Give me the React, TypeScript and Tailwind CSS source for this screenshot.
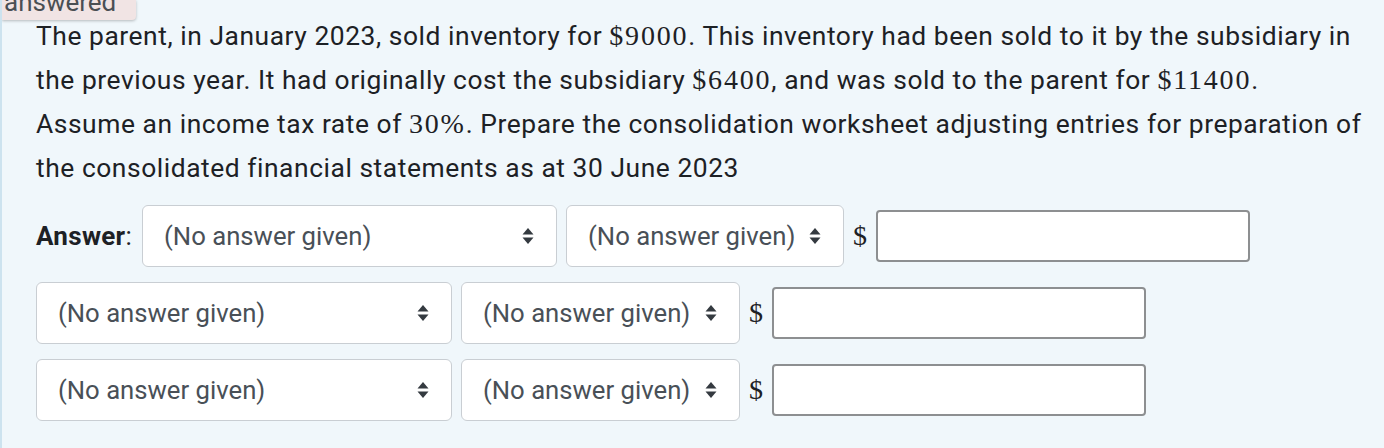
import React from "react";

function UpDown() {
  return (
    <svg width="12" height="18" viewBox="0 0 12 18" className="shrink-0">
      <path d="M6 1 L11.5 7.5 H0.5 Z" fill="#343a40" />
      <path d="M6 17 L11.5 10.5 H0.5 Z" fill="#343a40" />
    </svg>
  );
}

function Select({ w }: { w: string }) {
  return (
    <div className={`${w} h-[62px] shrink-0 flex items-center justify-between pl-[21px] pr-[22px] bg-white border border-[#c9ced3] rounded-[6px] text-[#495057]`}>
      <span>(No answer given)</span>
      <UpDown />
    </div>
  );
}

function Money() {
  return (
    <div className="flex items-center gap-[9px]">
      <span className="font-['Liberation_Serif',serif] text-[28px] leading-none text-[#1d2125]">$</span>
      <div className="w-[374px] h-[52px] bg-white border-2 border-[#8d8f91] rounded-[4px]" />
    </div>
  );
}

function M({ children }: { children: React.ReactNode }) {
  return <span className="font-['Liberation_Serif',serif] text-[28px] leading-none tracking-[1.8px]">{children}</span>;
}

export default function App() {
  return (
    <div className="relative h-[448px] bg-[#f0f7fb] border-l-2 border-[#cde3ef] font-['Roboto',sans-serif] text-[#1d2125] overflow-hidden">
      <div className="absolute left-0 top-0 w-[134px] h-[20px] bg-[#f1e4e4] rounded-br-[4px] shadow-[0_1px_3px_rgba(0,0,0,0.25)] overflow-hidden">
        <div className="absolute left-[2px] top-[-13px] text-[26px] leading-[30px] text-[#4a4f54]">answered</div>
      </div>

      <div className="pt-[14px] pl-[34px] pr-[19px]">
        <p className="text-[26.4px] leading-[44px] tracking-[0.55px]">
          The parent, in January 2023, sold inventory for <M>$9000</M>. This inventory had been sold to it by the subsidiary in the previous year. It had originally cost the subsidiary <M>$6400</M>, and was sold to the parent for <M>$11400</M>. Assume an income tax rate of <M>30%</M>. Prepare the consolidation worksheet adjusting entries for preparation of the consolidated financial statements as at 30 June 2023
        </p>

        <div className="mt-[15px] flex flex-col gap-[15px] text-[25.7px]">
          <div className="flex items-center gap-[9px]">
            <span className="text-[26px] tracking-[0.3px] mr-[1px]"><b className="font-bold">Answer</b>:</span>
            <Select w="w-[415px]" />
            <Select w="w-[278px]" />
            <Money />
          </div>
          <div className="flex items-center gap-[9px]">
            <Select w="w-[416px]" />
            <Select w="w-[279px]" />
            <Money />
          </div>
          <div className="flex items-center gap-[9px]">
            <Select w="w-[416px]" />
            <Select w="w-[279px]" />
            <Money />
          </div>
        </div>
      </div>
    </div>
  );
}
